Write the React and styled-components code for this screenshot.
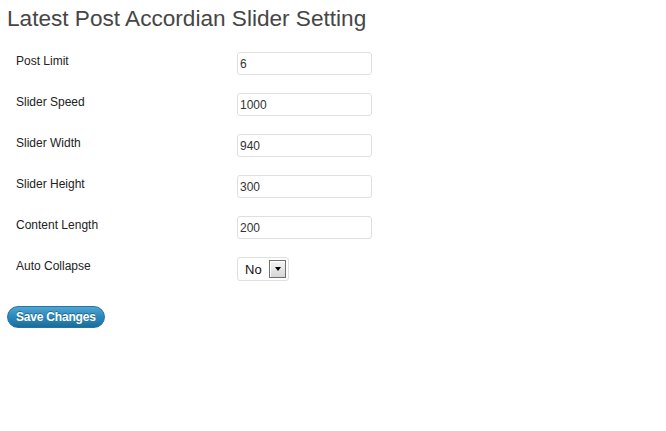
import { createGlobalStyle } from "styled-components";
import styled from "styled-components";

const GlobalStyle = createGlobalStyle`
  html, body {
    margin: 0;
    padding: 0;
    background: #ffffff;
  }
  body {
    font-family: "Liberation Sans", Arial, sans-serif;
    font-size: 12px;
    color: #333333;
  }
`;

const Wrap = styled.div`
  padding: 0 7px;
`;

const Title = styled.h2`
  margin: 0;
  padding: 5px 0 0;
  font-family: "Liberation Sans", Arial, sans-serif;
  font-weight: normal;
  font-size: 22.6px;
  line-height: 27px;
  color: #464646;
`;

const FormTable = styled.div`
  display: flex;
  flex-direction: column;
  gap: 18px;
  margin-top: 20px;
  padding-left: 9px;
`;

const Row = styled.div`
  display: grid;
  grid-template-columns: 221px auto;
  align-items: start;
`;

const Label = styled.label`
  font-size: 12px;
  line-height: 15px;
  padding-top: 2px;
  color: #222222;
`;

const TextInput = styled.input`
  box-sizing: border-box;
  width: 135px;
  height: 23px;
  margin: 0;
  padding: 1px 2px 0;
  border: 1px solid #dfdfdf;
  border-radius: 3px;
  background: #ffffff;
  font-family: "Liberation Sans", Arial, sans-serif;
  font-size: 12px;
  color: #333333;
  outline: none;
`;

const Select = styled.div`
  box-sizing: border-box;
  width: 52px;
  height: 24px;
  border: 1px solid #dfdfdf;
  border-radius: 3px;
  display: flex;
  align-items: center;
  padding-left: 7px;
  gap: 7px;
  font-size: 13px;
  color: #111111;
`;

const SelectText = styled.span`
  width: 17px;
`;

const ArrowBox = styled.span`
  box-sizing: border-box;
  width: 17px;
  height: 18px;
  border: 1px solid #6f6f6f;
  background: linear-gradient(#f4f4f4, #d6d6d6);
  box-shadow: inset 1px 1px 0 #ffffff;
  display: flex;
  align-items: center;
  justify-content: center;

  &::after {
    content: "";
    border-left: 3.5px solid transparent;
    border-right: 3.5px solid transparent;
    border-top: 4px solid #000000;
  }
`;

const Submit = styled.button`
  margin-top: 25px;
  height: 22px;
  padding: 0 8px;
  border: 1px solid #2475a3;
  border-radius: 11px;
  background: linear-gradient(#52a5d1, #2b8abd 45%, #2279aa 80%, #1c6b96);
  color: #ffffff;
  font-family: "Liberation Sans", Arial, sans-serif;
  font-weight: bold;
  font-size: 12px;
  letter-spacing: -0.2px;
  line-height: 20px;
  text-shadow: 0 -1px 0 rgba(0, 0, 0, 0.3);
  cursor: pointer;
`;

const fields = [
  { label: "Post Limit", value: "6" },
  { label: "Slider Speed", value: "1000" },
  { label: "Slider Width", value: "940" },
  { label: "Slider Height", value: "300" },
  { label: "Content Length", value: "200" },
];

export default function App() {
  return (
    <>
      <GlobalStyle />
      <Wrap>
        <Title>Latest Post Accordian Slider Setting</Title>
        <FormTable>
          {fields.map((f) => (
            <Row key={f.label}>
              <Label>{f.label}</Label>
              <TextInput defaultValue={f.value} />
            </Row>
          ))}
          <Row>
            <Label>Auto Collapse</Label>
            <Select>
              <SelectText>No</SelectText>
              <ArrowBox />
            </Select>
          </Row>
        </FormTable>
        <Submit type="button">Save Changes</Submit>
      </Wrap>
    </>
  );
}
